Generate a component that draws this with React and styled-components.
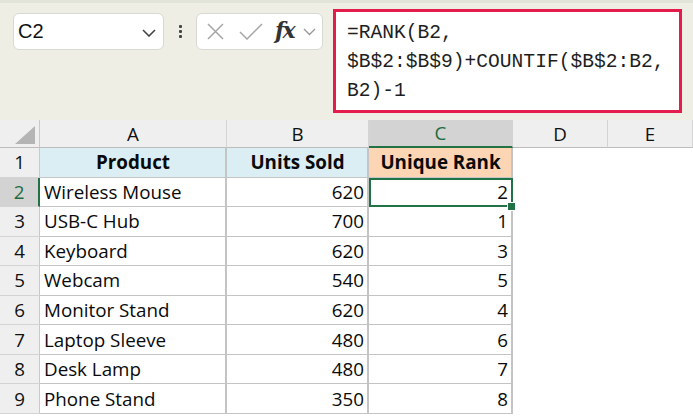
import React from 'react'
import styled, { createGlobalStyle } from 'styled-components'

const Global = createGlobalStyle`
  html, body { margin: 0; padding: 0; background: #ffffff; }
  body { width: 693px; height: 416px; overflow: hidden; }
`

const rows = [
  ['Wireless Mouse', 620, 2],
  ['USB-C Hub', 700, 1],
  ['Keyboard', 620, 3],
  ['Webcam', 540, 5],
  ['Monitor Stand', 620, 4],
  ['Laptop Sleeve', 480, 6],
  ['Desk Lamp', 480, 7],
  ['Phone Stand', 350, 8],
]

const cols = ['A', 'B', 'C', 'D', 'E']

export default function App() {
  return (
    <Page>
      <Global />
      <FormulaBar>
        <NameBox>
          <span>C2</span>
          <Chevron width="14" height="8" viewBox="0 0 14 8">
            <path d="M1 1l6 6 6-6" fill="none" stroke="#444" strokeWidth="1.6" />
          </Chevron>
        </NameBox>
        <Dots>
          <i /><i /><i />
        </Dots>
        <FxBox>
          <svg width="17" height="17" viewBox="0 0 17 17">
            <path d="M1 1l15 15M16 1L1 16" stroke="#a6a6a6" strokeWidth="1.5" />
          </svg>
          <svg width="24" height="17" viewBox="0 0 24 17">
            <path d="M1 9l7 7L23 1" fill="none" stroke="#a6a6a6" strokeWidth="1.5" />
          </svg>
          <Fx>fx</Fx>
          <svg width="13" height="8" viewBox="0 0 13 8">
            <path d="M1 1l5.5 5.5L12 1" fill="none" stroke="#9a9a9a" strokeWidth="1.4" />
          </svg>
        </FxBox>
        <FormulaBox>
          =RANK(B2,<br />
          $B$2:$B$9)+COUNTIF($B$2:B2,<br />
          B2)-1
        </FormulaBox>
      </FormulaBar>

      <Sheet>
        <Corner>
          <svg width="20" height="18" viewBox="0 0 20 18">
            <path d="M20 0V18H0Z" fill="#b4b4b4" />
          </svg>
        </Corner>
        {cols.map((c) => (
          <ColHead key={c} $active={c === 'C'}>{c}</ColHead>
        ))}

        <RowHead>1</RowHead>
        <Cell $bg="#daeef3" $bold $center>Product</Cell>
        <Cell $bg="#daeef3" $bold $center>Units Sold</Cell>
        <Cell $bg="#fcd5b4" $bold $center>Unique Rank</Cell>
        <Blank />
        <Blank />

        {rows.map(([name, units, rank], i) => (
          <React.Fragment key={name}>
            <RowHead $active={i === 0}>{i + 2}</RowHead>
            <Cell>{name}</Cell>
            <Cell $right>{units}</Cell>
            <Cell $right $selected={i === 0}>
              {rank}
              {i === 0 && <Handle />}
            </Cell>
            <Blank />
            <Blank />
          </React.Fragment>
        ))}
      </Sheet>
    </Page>
  )
}

const Page = styled.div`
  width: 693px;
  height: 416px;
  display: flex;
  flex-direction: column;
  background: #ffffff;
`

const FormulaBar = styled.div`
  height: 120px;
  box-sizing: border-box;
  background: #eeeee5;
  border-top: 3px solid #e2e4d9;
  display: flex;
  align-items: flex-start;
  padding: 10px 0 0 13px;
`

const NameBox = styled.div`
  width: 151px;
  height: 37px;
  box-sizing: border-box;
  background: #ffffff;
  border: 1px solid #d9d9d4;
  border-radius: 6px;
  display: flex;
  align-items: center;
  justify-content: space-between;
  padding: 0 7px 0 4px;
  font-family: 'Liberation Sans', Arial, sans-serif;
  font-size: 20px;
  color: #111;
`

const Chevron = styled.svg`
  margin-top: 2px;
`

const Dots = styled.div`
  width: 32px;
  height: 37px;
  display: flex;
  flex-direction: column;
  align-items: center;
  justify-content: center;
  gap: 2px;
  i {
    width: 3px;
    height: 3px;
    background: #444;
    border-radius: 1px;
  }
`

const FxBox = styled.div`
  width: 127px;
  height: 37px;
  box-sizing: border-box;
  background: #ffffff;
  border: 1px solid #d9d9d4;
  border-radius: 6px;
  display: flex;
  align-items: center;
  padding: 0 3px 0 10px;
  svg:nth-child(1) { margin-right: 15px; }
  svg:nth-child(2) { margin-right: 12px; }
`

const Fx = styled.span`
  font-family: 'DejaVu Serif', 'Liberation Serif', serif;
  font-style: italic;
  font-weight: 700;
  font-size: 22px;
  color: #333;
  margin-right: 9px;
  letter-spacing: -2px;
  line-height: 1;
  margin-top: -3px;
`

const FormulaBox = styled.div`
  margin: -4px 0 0 10px;
  width: 349px;
  height: 104px;
  box-sizing: border-box;
  background: #ffffff;
  border: 3px solid #e31c4c;
  padding: 7px 0 0 11px;
  font-family: 'Liberation Mono', 'Courier New', monospace;
  font-size: 19.6px;
  line-height: 29px;
  color: #1e1e1e;
  white-space: nowrap;
`

const Sheet = styled.div`
  display: grid;
  grid-template-columns: 40px 187px 142px 144px 95px 85px;
  grid-template-rows: 28px repeat(9, 29.56px);
  font-family: 'Open Sans', 'Liberation Sans', sans-serif;
  font-size: 18.8px;
  color: #0a0a0a;
`

const Corner = styled.div`
  background: #efefef;
  border-right: 1px solid #c9c9c9;
  border-bottom: 1px solid #bdbdbd;
  display: flex;
  align-items: flex-end;
  justify-content: flex-end;
  padding: 0 4px 3px 0;
`

const ColHead = styled.div`
  background: ${(p) => (p.$active ? '#d3d3d3' : '#efefef')};
  color: ${(p) => (p.$active ? '#1e6b40' : '#111')};
  border-right: 1px solid #d4d4d4;
  border-bottom: ${(p) => (p.$active ? '2px solid #217346' : '1px solid #bdbdbd')};
  display: flex;
  align-items: center;
  justify-content: center;
`

const RowHead = styled.div`
  background: ${(p) => (p.$active ? '#d3d3d3' : '#efefef')};
  color: ${(p) => (p.$active ? '#1e6b40' : '#111')};
  border-right: ${(p) => (p.$active ? '2px solid #217346' : '1px solid #c9c9c9')};
  border-bottom: 1px solid #d4d4d4;
  display: flex;
  align-items: center;
  justify-content: center;
`

const Cell = styled.div`
  position: relative;
  box-sizing: border-box;
  background: ${(p) => p.$bg || '#ffffff'};
  font-weight: ${(p) => (p.$bold ? 700 : 400)};
  border-right: 2px solid #c4c4c4;
  border-bottom: 1px solid #c4c4c4;
  display: flex;
  align-items: center;
  justify-content: ${(p) => (p.$center ? 'center' : p.$right ? 'flex-end' : 'flex-start')};
  padding: 0 3px 0 4px;
  white-space: nowrap;
  ${(p) =>
    p.$selected &&
    `
    outline: 2px solid #217346;
    outline-offset: -2px;
  `}
`

const Handle = styled.span`
  position: absolute;
  right: -5px;
  bottom: -5px;
  width: 7px;
  height: 7px;
  background: #217346;
  border: 1px solid #ffffff;
  z-index: 2;
`

const Blank = styled.div`
  background: #ffffff;
`
